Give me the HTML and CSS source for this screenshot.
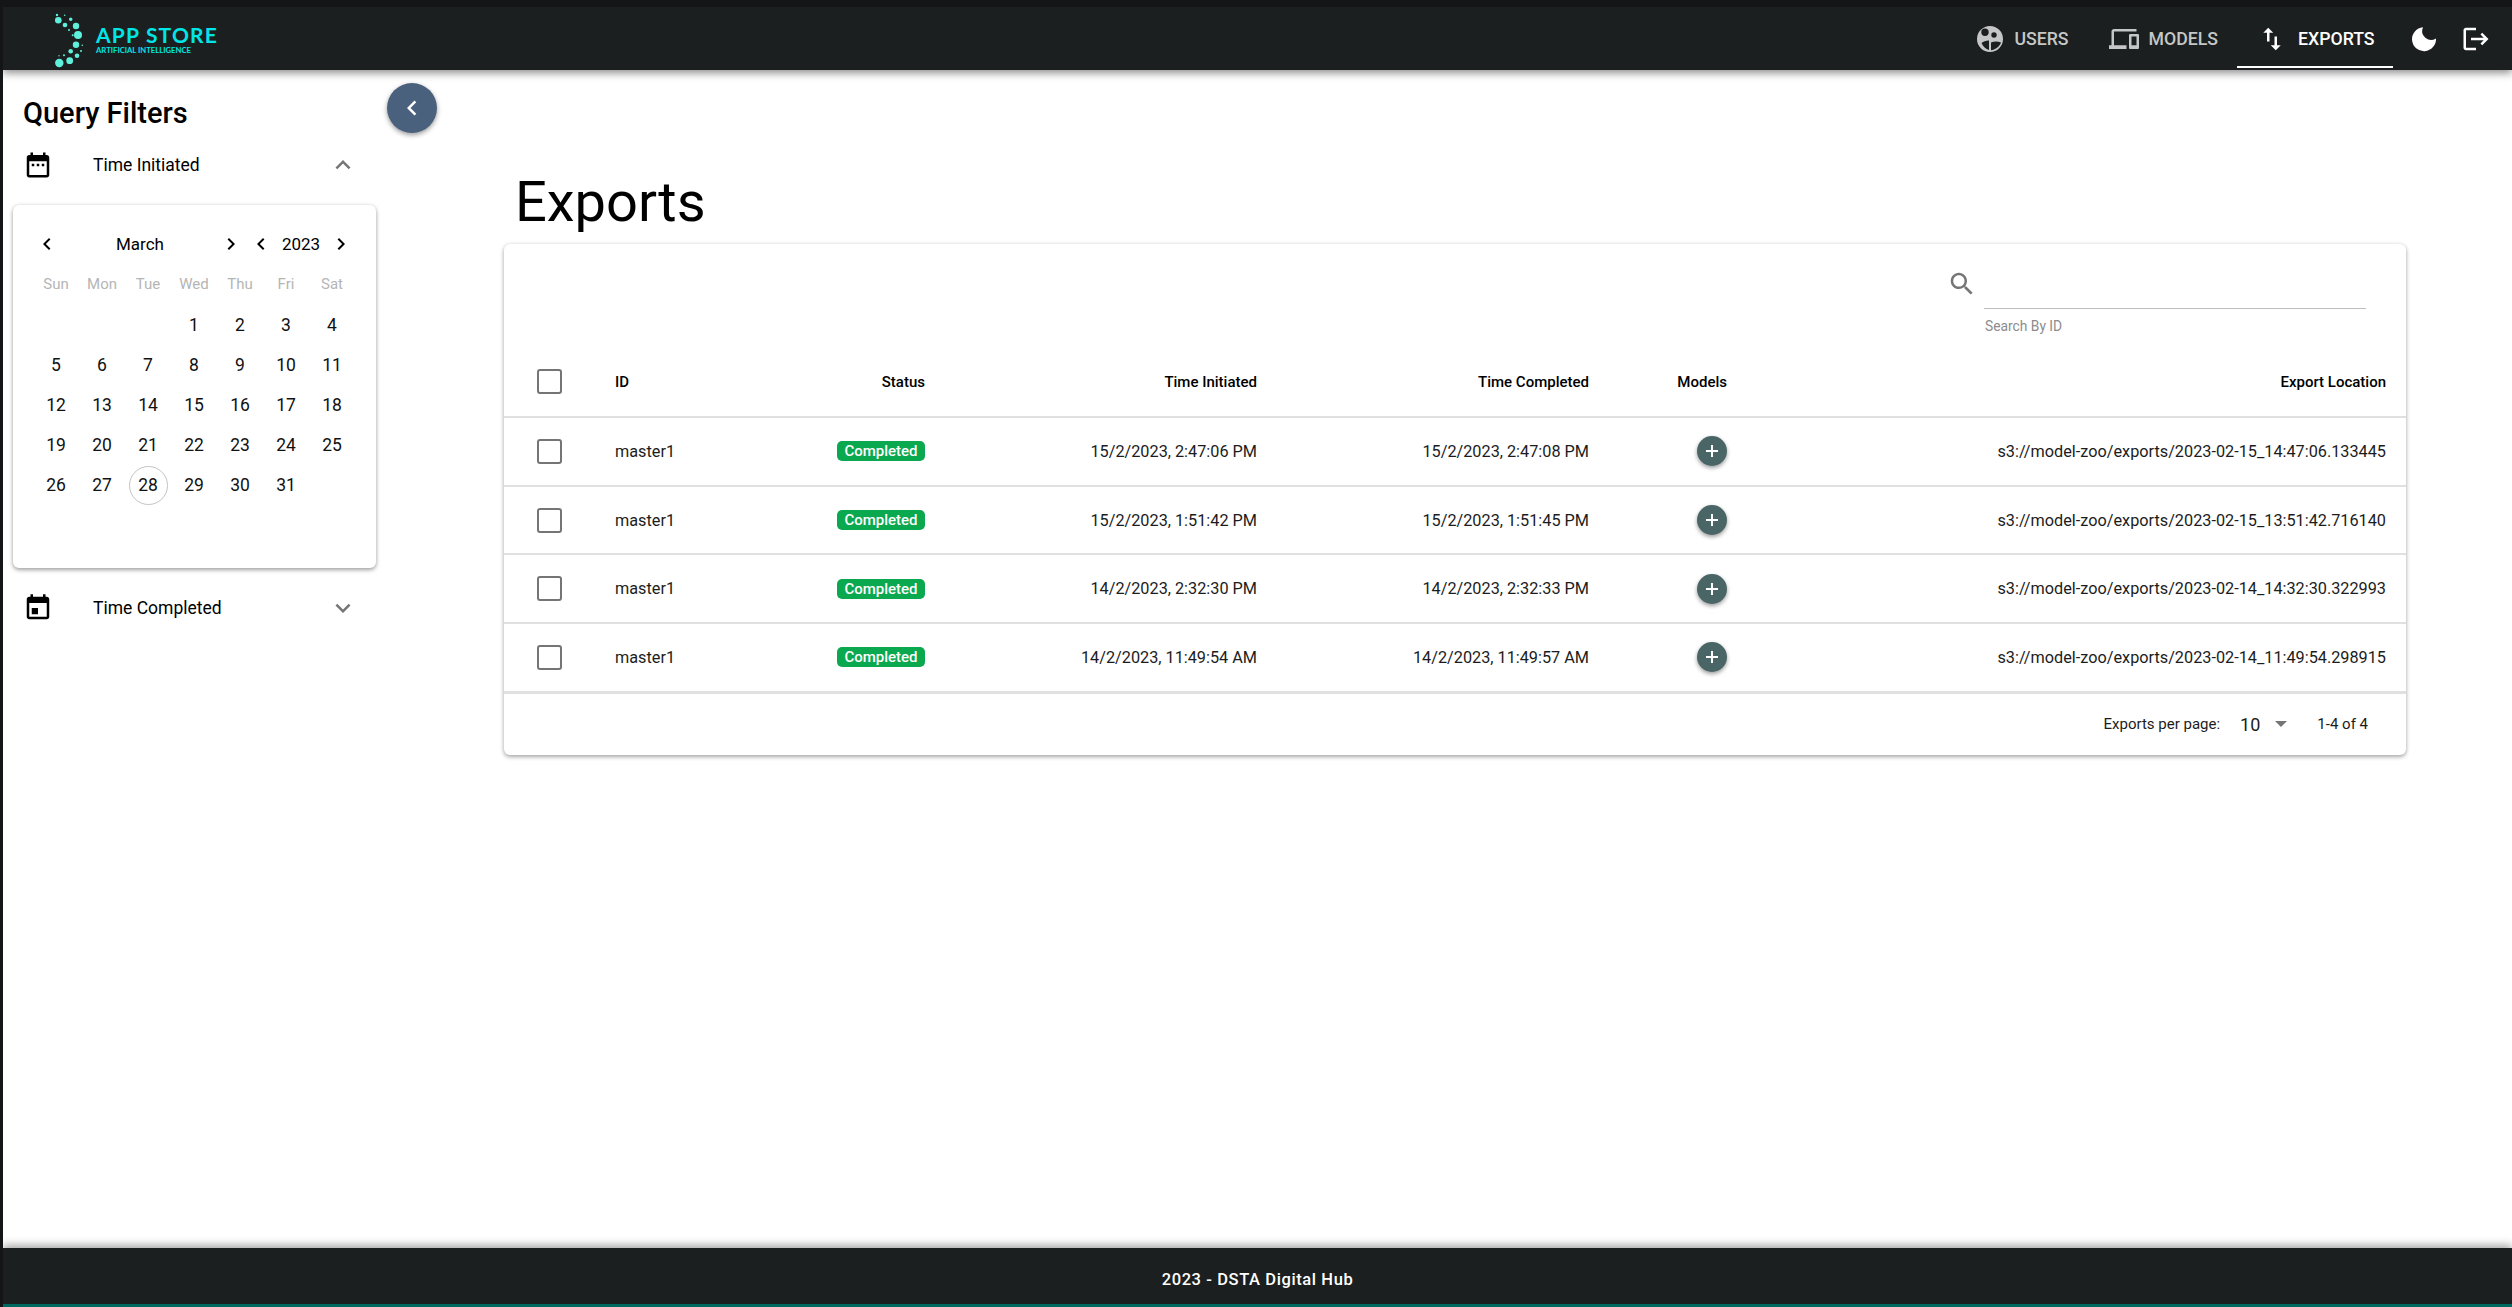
FILE: index.html
```html
<!DOCTYPE html>
<html>
<head>
    <title>App Store - Exports</title>
    <link rel="stylesheet" href="styles.css">
</head>
<body>
    <!-- Top navigation bar -->
    <header class="topbar">
        <div class="logo">
            <svg class="logo-mark" width="40" height="60" viewBox="50 7 40 60" fill="#5ff0dc">
                <circle cx="58.3" cy="18.3" r="3.3"/><circle cx="76" cy="24" r="3.2"/><circle cx="65" cy="23" r="2.3"/>
                <circle cx="57" cy="13" r="1.2"/><circle cx="64.7" cy="13.3" r="0.8"/><circle cx="70.7" cy="17.3" r="1.7"/>
                <circle cx="69" cy="28" r="1"/><circle cx="78" cy="33" r="4"/><circle cx="72.7" cy="33.3" r="1"/>
                <circle cx="76" cy="42.7" r="3.2"/><circle cx="70.7" cy="49.3" r="2.3"/><circle cx="82.3" cy="43.3" r="0.8"/>
                <circle cx="81" cy="49" r="1"/><circle cx="77" cy="53.7" r="2.3"/><circle cx="69.7" cy="58.7" r="3.4"/>
                <circle cx="59.3" cy="61" r="4.2"/><circle cx="64" cy="53.3" r="1"/><circle cx="59" cy="53.7" r="0.7"/>
            </svg>
            <div class="logo-text">
                <div class="logo-title">APP STORE</div>
                <div class="logo-sub">ARTIFICIAL INTELLIGENCE</div>
            </div>
        </div>
        <nav class="nav">
            <a class="nav-item nav-users">
                <svg width="28" height="28" viewBox="0 0 28 28" fill="currentColor"><path fill-rule="evenodd" d="M14 1a13 13 0 1 0 0 26a13 13 0 0 0 0-26zM9 3.500a3.700 3.700 0 1 1 0 7.400a3.700 3.700 0 0 1 0-7.400zM18 7.300a2.700 2.700 0 1 1 0 5.400a2.700 2.700 0 0 1 0-5.400zM13 15.500v9.500c-3.200-.9-6-3.500-7.500-7c2-1.700 5-2.700 7.500-2.500zM15 17.500c3-1.500 7-1.500 10 0c-1.500 4-5 7-10 7.800z"/></svg>
                <span>USERS</span>
            </a>
            <a class="nav-item nav-models">
                <svg width="30" height="30" viewBox="0 0 24 24" fill="currentColor"><path d="M4 6h18V4H4c-1.100 0-2 .9-2 2v11H0v3h14v-3H4V6zm19 2h-6c-.55 0-1 .45-1 1v10c0 .55.45 1 1 1h6c.55 0 1-.45 1-1V9c0-.55-.45-1-1-1zm-1 9h-4v-7h4v7z"/></svg>
                <span>MODELS</span>
            </a>
            <a class="nav-item nav-exports">
                <svg width="30" height="30" viewBox="0 0 24 24" fill="currentColor"><path d="M9 3L5 6.990h3V14h2V6.990h3L9 3zm7 14.010V10h-2v7.010h-3L15 21l4-3.990h-3z"/></svg>
                <span>EXPORTS</span>
            </a>
            <svg class="nav-moon" width="26" height="26" viewBox="0 0 26 26" fill="#fff"><path d="M12 1.200A12 12 0 1 0 25 12.500A9 9 0 0 1 12 1.200z"/></svg>
            <svg class="nav-logout" width="30" height="30" viewBox="0 0 24 24" fill="#fff"><path d="M17 7l-1.410 1.410L18.170 11H8v2h10.170l-2.580 2.580L17 17l5-5zM4 5h8V3H4c-1.100 0-2 .9-2 2v14c0 1.100.9 2 2 2h8v-2H4V5z"/></svg>
        </nav>
    </header>

    <div class="content">
        <!-- Query filters -->
        <aside class="sidebar">
            <h2 class="filters-title">Query Filters</h2>

            <div class="filter-row">
                <svg class="filter-icon" width="30" height="30" viewBox="0 0 24 24"><path d="M9 11H7v2h2v-2zm4 0h-2v2h2v-2zm4 0h-2v2h2v-2zm2-7h-1V2h-2v2H8V2H6v2H5c-1.110 0-1.990.9-1.990 2L3 20c0 1.100.89 2 2 2h14c1.100 0 2-.9 2-2V6c0-1.100-.9-2-2-2zm0 16H5V9h14v11z"/></svg>
                <span class="filter-label">Time Initiated</span>
                <svg class="filter-chevron" width="30" height="30" viewBox="0 0 24 24"><path d="M12 8l-6 6 1.410 1.410L12 10.830l4.590 4.580L18 14z"/></svg>
            </div>

            <div class="calendar">
                <div class="cal-header">
                    <svg class="cal-btn cal-btn-first" width="24" height="24" viewBox="0 0 24 24"><path d="M15.410 7.410L14 6l-6 6 6 6 1.410-1.410L10.830 12z"/></svg>
                    <span class="cal-month">March</span>
                    <svg class="cal-btn" width="24" height="24" viewBox="0 0 24 24"><path d="M10 6L8.590 7.410 13.170 12l-4.580 4.590L10 18l6-6z"/></svg>
                    <svg class="cal-btn cal-btn-year" width="24" height="24" viewBox="0 0 24 24"><path d="M15.410 7.410L14 6l-6 6 6 6 1.410-1.410L10.830 12z"/></svg>
                    <span class="cal-year">2023</span>
                    <svg class="cal-btn" width="24" height="24" viewBox="0 0 24 24"><path d="M10 6L8.590 7.410 13.170 12l-4.580 4.590L10 18l6-6z"/></svg>
                </div>
                <div class="cal-weekdays">
                    <span>Sun</span><span>Mon</span><span>Tue</span><span>Wed</span><span>Thu</span><span>Fri</span><span>Sat</span>
                </div>
                <div class="cal-days">
                    <span></span><span></span><span></span><span>1</span><span>2</span><span>3</span><span>4</span>
                    <span>5</span><span>6</span><span>7</span><span>8</span><span>9</span><span>10</span><span>11</span>
                    <span>12</span><span>13</span><span>14</span><span>15</span><span>16</span><span>17</span><span>18</span>
                    <span>19</span><span>20</span><span>21</span><span>22</span><span>23</span><span>24</span><span>25</span>
                    <span>26</span><span>27</span><span class="cal-today">28</span><span>29</span><span>30</span><span>31</span><span></span>
                </div>
            </div>

            <div class="filter-row">
                <svg class="filter-icon" width="30" height="30" viewBox="0 0 24 24"><path d="M17 12h-5v5h5v-5zM16 1v2H8V1H6v2H5c-1.110 0-1.990.9-1.990 2L3 19c0 1.100.89 2 2 2h14c1.100 0 2-.9 2-2V5c0-1.100-.9-2-2-2h-1V1h-2zm3 18H5V8h14v11z" transform="matrix(-1 0 0 1 24 0)"/></svg>
                <span class="filter-label">Time Completed</span>
                <svg class="filter-chevron" width="30" height="30" viewBox="0 0 24 24"><path d="M16.590 8.590L12 13.170 7.410 8.590 6 10l6 6 6-6z"/></svg>
            </div>
        </aside>

        <!-- Collapse button for the sidebar -->
        <button class="collapse-btn">
            <svg width="30" height="30" viewBox="0 0 24 24" fill="#fff"><path d="M15.410 7.410L14 6l-6 6 6 6 1.410-1.410L10.830 12z"/></svg>
        </button>

        <main class="main">
            <h1 class="page-title">Exports</h1>

            <section class="card">
                <div class="search">
                    <svg class="search-icon" width="30" height="30" viewBox="0 0 24 24"><path d="M15.500 14h-.79l-.28-.27C15.410 12.590 16 11.110 16 9.500 16 5.910 13.090 3 9.500 3S3 5.910 3 9.500 5.910 16 9.500 16c1.610 0 3.090-.59 4.230-1.570l.27.28v.79l5 4.990L20.490 19l-4.990-5zm-6 0C7.010 14 5 11.990 5 9.500S7.010 5 9.500 5 14 7.010 14 9.500 11.990 14 9.500 14z"/></svg>
                    <div class="search-field">
                        <div class="search-line"></div>
                        <div class="search-hint">Search By ID</div>
                    </div>
                </div>

                <table class="exports">
                    <colgroup>
                        <col class="col-check"><col class="col-id"><col class="col-status"><col class="col-time"><col class="col-time"><col class="col-models"><col>
                    </colgroup>
                    <thead>
                        <tr>
                            <th><div class="checkbox"></div></th>
                            <th class="left">ID</th>
                            <th>Status</th>
                            <th>Time Initiated</th>
                            <th>Time Completed</th>
                            <th>Models</th>
                            <th>Export Location</th>
                        </tr>
                    </thead>
                    <tbody>
                        <tr>
                            <td><div class="checkbox"></div></td>
                            <td class="left">master1</td>
                            <td><span class="badge">Completed</span></td>
                            <td>15/2/2023, 2:47:06 PM</td>
                            <td>15/2/2023, 2:47:08 PM</td>
                            <td><span class="plus"></span></td>
                            <td>s3://model-zoo/exports/2023-02-15_14:47:06.133445</td>
                        </tr>
                        <tr>
                            <td><div class="checkbox"></div></td>
                            <td class="left">master1</td>
                            <td><span class="badge">Completed</span></td>
                            <td>15/2/2023, 1:51:42 PM</td>
                            <td>15/2/2023, 1:51:45 PM</td>
                            <td><span class="plus"></span></td>
                            <td>s3://model-zoo/exports/2023-02-15_13:51:42.716140</td>
                        </tr>
                        <tr>
                            <td><div class="checkbox"></div></td>
                            <td class="left">master1</td>
                            <td><span class="badge">Completed</span></td>
                            <td>14/2/2023, 2:32:30 PM</td>
                            <td>14/2/2023, 2:32:33 PM</td>
                            <td><span class="plus"></span></td>
                            <td>s3://model-zoo/exports/2023-02-14_14:32:30.322993</td>
                        </tr>
                        <tr>
                            <td><div class="checkbox"></div></td>
                            <td class="left">master1</td>
                            <td><span class="badge">Completed</span></td>
                            <td>14/2/2023, 11:49:54 AM</td>
                            <td>14/2/2023, 11:49:57 AM</td>
                            <td><span class="plus"></span></td>
                            <td>s3://model-zoo/exports/2023-02-14_11:49:54.298915</td>
                        </tr>
                    </tbody>
                </table>

                <div class="pager">
                    <span>Exports per page:</span>
                    <span class="pager-size">10</span>
                    <span class="pager-arrow"></span>
                    <span class="pager-range">1-4 of 4</span>
                </div>
            </section>
        </main>
    </div>

    <footer class="footer">2023 - DSTA Digital Hub</footer>
</body>
</html>
```

FILE: styles.css
```css
/* Page frame: dark strip on the top and left of the window */
html, body {
    height: 100%;
}

body {
    margin: 0;
    display: flex;
    flex-direction: column;
    box-sizing: border-box;
    height: 100vh;
    overflow: hidden;
    border-top: 7px solid #141516;
    border-left: 3px solid #141516;
    background-color: #fff;
    color: #000;
    font-family: Roboto, "Liberation Sans", sans-serif;
}

/* Top navigation bar */
.topbar {
    flex: none;
    height: 63px;
    display: flex;
    align-items: center;
    justify-content: space-between;
    background-color: #1b1f20;
    box-shadow: 0 3px 8px rgba(0, 0, 0, 0.45);
    position: relative;
    z-index: 2;
}

.logo {
    display: flex;
    align-items: center;
    margin-left: 47px;
}

.logo-mark {
    display: block;
}

.logo-text {
    margin-left: 6px;
    margin-top: 2px;
    color: #00e6e6;
    font-family: Lato, sans-serif;
}

.logo-title {
    font-size: 21px;
    line-height: 22px;
    font-weight: 700;
    letter-spacing: 1.2px;
    white-space: nowrap;
}

.logo-sub {
    font-size: 7.7px;
    line-height: 9px;
    font-weight: 700;
    white-space: nowrap;
}

.nav {
    display: flex;
    align-items: center;
    height: 100%;
}

.nav-item {
    display: flex;
    align-items: center;
    box-sizing: border-box;
    height: 100%;
    color: rgba(255, 255, 255, 0.75);
    font-size: 17.7px;
    font-weight: 500;
}

.nav-users {
    gap: 10px;
}

.nav-models {
    gap: 10px;
    margin-left: 40px;
}

.nav-exports {
    gap: 11px;
    align-self: flex-start;
    height: 61px;
    margin-left: 19px;
    width: 156px;
    padding-top: 4px;
    padding-left: 20px;
    color: #fff;
    border-bottom: 2px solid #fff;
}

.nav-moon {
    margin-left: 18px;
}

.nav-logout {
    margin-left: 24px;
    margin-right: 21px;
}

/* Area between the bars */
.content {
    flex: 1;
    display: flex;
    position: relative;
    min-height: 0;
}

.sidebar {
    flex: none;
    box-sizing: border-box;
    width: 500px;
    padding-left: 10px;
}

.filters-title {
    margin: 23px 0 2px;
    padding-left: 10px;
    font-size: 29px;
    line-height: 40px;
    font-weight: 500;
}

.filter-row {
    display: flex;
    align-items: center;
    box-sizing: border-box;
    width: 363px;
    height: 60px;
    padding: 0 18px 0 10px;
}

.filter-icon {
    fill: #000;
}

.filter-label {
    flex: 1;
    margin-left: 40px;
    font-size: 17.5px;
}

.filter-chevron {
    fill: #757575;
}

/* Calendar popup in the filter list */
.calendar {
    box-sizing: border-box;
    width: 363px;
    height: 363px;
    margin: 10px 0;
    padding: 21px 20px 0;
    border-radius: 6px;
    background-color: #fff;
    box-shadow: 0 2px 4px rgba(0, 0, 0, 0.35), 0 0 4px rgba(0, 0, 0, 0.08);
}

.cal-header {
    display: flex;
    align-items: center;
    height: 36px;
    font-size: 17px;
}

.cal-btn-first {
    margin-left: 2px;
    margin-right: 2px;
}

.cal-btn-year {
    margin-left: 6px;
}

.cal-month {
    width: 158px;
    text-align: center;
}

.cal-year {
    width: 56px;
    text-align: center;
}

.cal-weekdays,
.cal-days {
    display: grid;
    grid-template-columns: repeat(7, 46px);
    text-align: center;
}

.cal-weekdays {
    margin-top: 10px;
    line-height: 24px;
    font-size: 15px;
    color: #b5b5b5;
}

.cal-days {
    margin-top: 9px;
    grid-auto-rows: 40px;
    font-size: 17.5px;
    color: #111;
}

.cal-days span {
    display: flex;
    align-items: center;
    justify-content: center;
}

.cal-today {
    box-sizing: border-box;
    width: 39px;
    height: 39px;
    margin: auto;
    border: 1px solid #c4c4c4;
    border-radius: 50%;
}

.collapse-btn {
    position: absolute;
    left: 384px;
    top: 13px;
    display: flex;
    align-items: center;
    justify-content: center;
    width: 50px;
    height: 50px;
    padding: 0;
    border: none;
    border-radius: 50%;
    background-color: #4a617e;
    box-shadow: 0 2px 5px rgba(0, 0, 0, 0.4);
}

/* Main column */
.main {
    flex: none;
    width: 1902px;
    margin-left: 1px;
}

.page-title {
    margin: 99px 0 8px 11px;
    font-size: 56px;
    line-height: 67px;
    font-weight: 400;
}

.card {
    border-radius: 6px;
    background-color: #fff;
    box-shadow: 0 2px 4px rgba(0, 0, 0, 0.32), 0 0 4px rgba(0, 0, 0, 0.08);
}

.search {
    display: flex;
    justify-content: flex-end;
    align-items: flex-start;
    box-sizing: border-box;
    height: 101px;
    padding: 24px 40px 0 0;
}

.search-icon {
    fill: #757575;
    margin-top: 1px;
    margin-right: 7px;
}

.search-field {
    width: 382px;
}

.search-line {
    height: 40px;
    border-bottom: 1px solid #bdbdbd;
}

.search-hint {
    margin-top: 9px;
    padding-left: 1px;
    font-size: 13.8px;
    color: #8c8c8c;
}

/* Exports table */
.exports {
    width: 100%;
    table-layout: fixed;
    border-collapse: collapse;
    font-size: 16.25px;
}

.col-check {
    width: 94px;
}

.col-id {
    width: 102px;
}

.col-status {
    width: 245px;
}

.col-time {
    width: 332px;
}

.col-models {
    width: 138px;
}

.exports th,
.exports td {
    padding: 0 20px 0 0;
    text-align: right;
    border-bottom: 2px solid #e0e0e0;
}

.exports th {
    height: 69px;
    padding-top: 2px;
    font-size: 15px;
    font-weight: 500;
}

.exports td {
    height: 66.7px;
    color: #1c1c1c;
}

.exports tbody tr:last-child td {
    border-bottom-width: 3px;
}

.exports .left {
    padding-left: 17px;
    padding-right: 0;
    text-align: left;
}

.checkbox {
    box-sizing: border-box;
    width: 25px;
    height: 25px;
    margin-left: 33px;
    border: 2px solid #757575;
    border-radius: 3px;
}

.badge {
    display: inline-block;
    box-sizing: border-box;
    width: 88px;
    line-height: 20px;
    border-radius: 5px;
    background-color: #0aa84f;
    color: #fff;
    font-size: 15px;
    font-weight: 500;
    text-align: center;
}

.plus {
    display: inline-block;
    vertical-align: middle;
    position: relative;
    width: 30px;
    height: 30px;
    border-radius: 50%;
    background-color: #4a6565;
    box-shadow: 0 2px 4px rgba(0, 0, 0, 0.4);
}

.plus::before,
.plus::after {
    content: "";
    position: absolute;
    background-color: #fff;
}

.plus::before {
    left: 9px;
    top: 14px;
    width: 12px;
    height: 2px;
}

.plus::after {
    left: 14px;
    top: 9px;
    width: 2px;
    height: 12px;
}

.pager {
    display: flex;
    align-items: center;
    justify-content: flex-end;
    height: 61px;
    padding-right: 38px;
    font-size: 15px;
    color: #1c1c1c;
}

.pager-size {
    margin-left: 20px;
    font-size: 18px;
}

.pager-arrow {
    margin-left: 15px;
    border-top: 6px solid #757575;
    border-left: 6px solid transparent;
    border-right: 6px solid transparent;
}

.pager-range {
    margin-left: 30px;
}

/* Footer bar */
.footer {
    flex: none;
    box-sizing: border-box;
    height: 59px;
    padding-top: 22px;
    border-bottom: 3px solid #00695f;
    background-color: #1b1f20;
    box-shadow: 0 -3px 8px rgba(0, 0, 0, 0.35);
    color: #fff;
    font-size: 16.5px;
    line-height: 20px;
    font-weight: 500;
    letter-spacing: 0.6px;
    text-align: center;
    position: relative;
}
```
